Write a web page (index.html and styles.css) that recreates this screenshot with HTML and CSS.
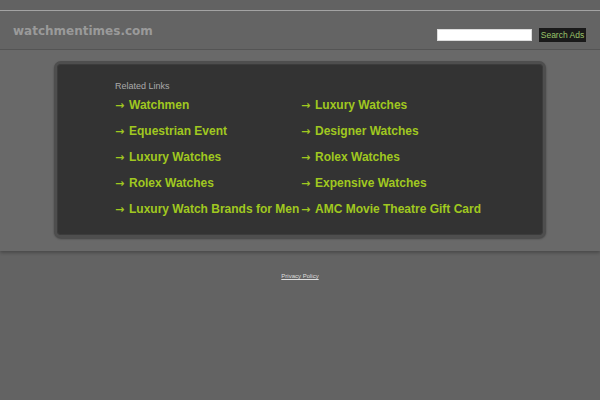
FILE: index.html
```html
<!DOCTYPE html>
<html>
<head>
<meta charset="utf-8">
<link rel="stylesheet" href="styles.css">
</head>
<body>
<div class="topline"></div>
<div class="header">
  <div class="title">watchmentimes.com</div>
  <form class="search">
    <input class="search-input" type="text">
    <button class="search-btn" type="button">Search Ads</button>
  </form>
</div>
<div class="main">
  <div class="box">
    <div class="label">Related Links</div>
    <div class="links">
      <a class="link" href="#"><span class="arrow">→</span>Watchmen</a>
      <a class="link" href="#"><span class="arrow">→</span>Luxury Watches</a>
      <a class="link" href="#"><span class="arrow">→</span>Equestrian Event</a>
      <a class="link" href="#"><span class="arrow">→</span>Designer Watches</a>
      <a class="link" href="#"><span class="arrow">→</span>Luxury Watches</a>
      <a class="link" href="#"><span class="arrow">→</span>Rolex Watches</a>
      <a class="link" href="#"><span class="arrow">→</span>Rolex Watches</a>
      <a class="link" href="#"><span class="arrow">→</span>Expensive Watches</a>
      <a class="link" href="#"><span class="arrow">→</span>Luxury Watch Brands for Men</a>
      <a class="link" href="#"><span class="arrow">→</span>AMC Movie Theatre Gift Card</a>
    </div>
  </div>
</div>
<div class="footer">
  <a class="privacy" href="#">Privacy Policy</a>
</div>
</body>
</html>
```
FILE: styles.css
```css
html, body {
  margin: 0;
  padding: 0;
}
body {
  background: #636363;
  font-family: "Liberation Sans", Arial, sans-serif;
  height: 400px;
  overflow: hidden;
}
.topline {
  height: 10px;
  background: #626262;
  border-bottom: 1px solid #a3a3a3;
}
.header {
  height: 38px;
  display: flex;
  align-items: center;
  justify-content: space-between;
  padding: 0 14px 0 13px;
  border-bottom: 1px solid #555;
  background: #646464;
}
.title {
  font-family: "DejaVu Sans", Verdana, sans-serif;
  font-weight: bold;
  font-size: 12px;
  color: #9a9a9a;
  margin-top: 2px;
}
.search {
  display: flex;
  align-items: center;
  gap: 7px;
  margin: 9px 0 0 0;
}
.search-input {
  width: 95px;
  height: 12px;
  box-sizing: border-box;
  border: 1px solid #ddd;
  background: #fff;
  padding: 0;
  margin: 0;
}
.search-btn {
  width: 47px;
  height: 14px;
  box-sizing: border-box;
  background: #1a1a1a;
  color: #9bc46a;
  border: none;
  font-family: "Liberation Sans", Arial, sans-serif;
  font-size: 8.5px;
  padding: 0;
  margin: 0;
  line-height: 14px;
  text-align: center;
  white-space: nowrap;
}
.main {
  background: #696969;
  padding: 11px 54px 13px 54px;
  box-shadow: 0 2px 3px rgba(0, 0, 0, 0.25);
}
.box {
  height: 171px;
  background: #333;
  border: 3px solid #4e4e4e;
  border-radius: 7px;
  box-shadow: 0 1px 2px rgba(0, 0, 0, 0.35), inset 0 0 0 1px #3c3c3c;
  padding: 0 0 0 58px;
}
.label {
  font-size: 9px;
  color: #aaa;
  margin-top: 16px;
  height: 12px;
  line-height: 12px;
}
.links {
  display: grid;
  grid-template-columns: 186px 200px;
  grid-auto-rows: 26px;
}
.link {
  font-size: 12px;
  font-weight: bold;
  color: #a0c820;
  text-decoration: none;
  line-height: 26px;
  white-space: nowrap;
}
.arrow {
  display: inline-block;
  width: 14px;
  font-family: "DejaVu Sans", sans-serif;
  font-size: 11px;
  font-weight: bold;
}
.footer {
  text-align: center;
  padding-top: 13px;
}
.privacy {
  font-size: 6px;
  color: #ddd;
  text-decoration: underline;
}
```
